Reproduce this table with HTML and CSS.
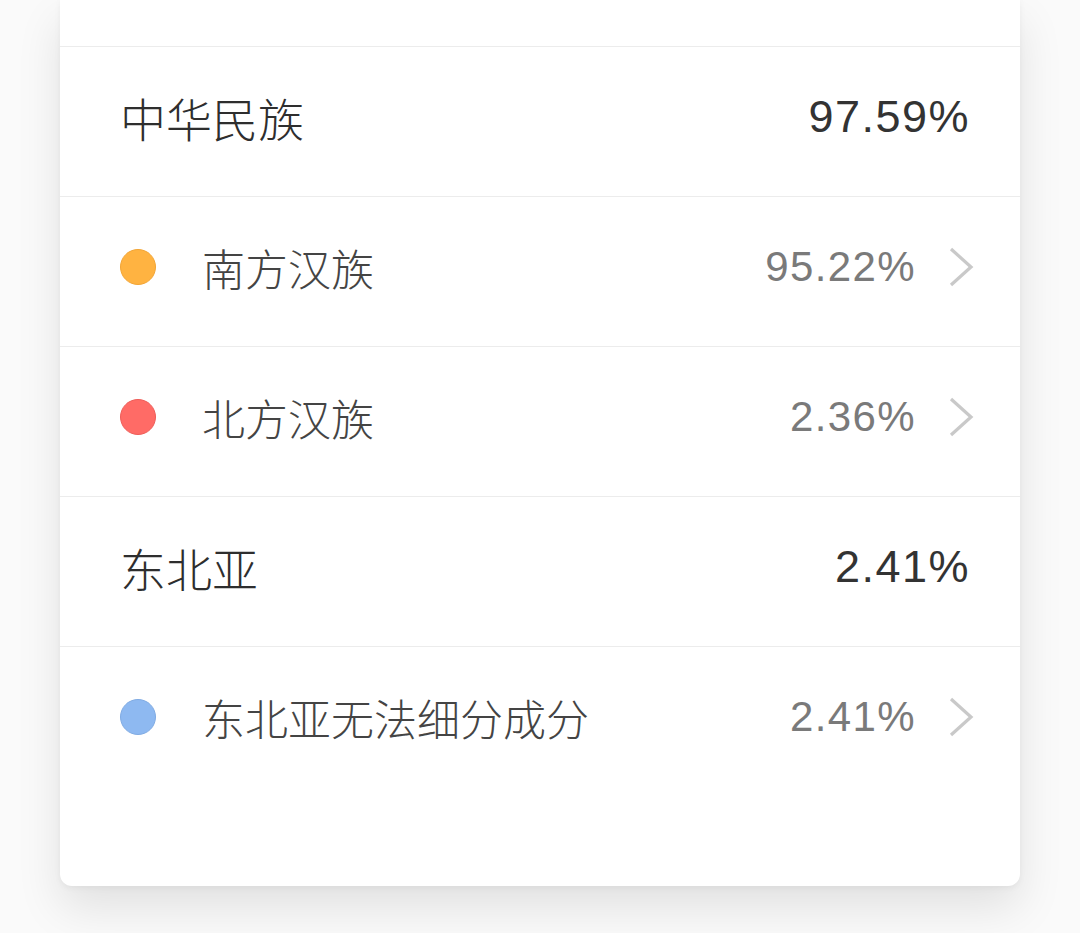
FILE: index.html
```html
<!DOCTYPE html>
<html lang="zh-CN">
<head>
<meta charset="utf-8">
<link rel="stylesheet" href="styles.css">
</head>
<body>
<div class="card">
  <div class="row spacer"></div>
  <div class="row main">
    <span class="label">中华民族</span>
    <span class="num">97.59%</span>
  </div>
  <div class="row sub">
    <span class="dot orange"></span>
    <span class="label">南方汉族</span>
    <span class="num">95.22%</span>
    <svg class="chev" viewBox="0 0 26 40" width="26" height="40"><path d="M3 2 L23 20 L3 38" fill="none" stroke="#c9c9c9" stroke-width="3.2"/></svg>
  </div>
  <div class="row sub">
    <span class="dot red"></span>
    <span class="label">北方汉族</span>
    <span class="num">2.36%</span>
    <svg class="chev" viewBox="0 0 26 40" width="26" height="40"><path d="M3 2 L23 20 L3 38" fill="none" stroke="#c9c9c9" stroke-width="3.2"/></svg>
  </div>
  <div class="row main">
    <span class="label">东北亚</span>
    <span class="num">2.41%</span>
  </div>
  <div class="row sub last">
    <span class="dot blue"></span>
    <span class="label">东北亚无法细分成分</span>
    <span class="num">2.41%</span>
    <svg class="chev" viewBox="0 0 26 40" width="26" height="40"><path d="M3 2 L23 20 L3 38" fill="none" stroke="#c9c9c9" stroke-width="3.2"/></svg>
  </div>
</div>
</body>
</html>
```

FILE: styles.css
```css
html, body {
  margin: 0;
  padding: 0;
  background: #fafafa;
  height: 933px;
  overflow: hidden;
}
body {
  font-family: "Noto Sans CJK SC", "Liberation Sans", sans-serif;
}
.card {
  margin-left: 60px;
  width: 960px;
  background: #fff;
  border-radius: 0 0 12px 12px;
  box-shadow: 0 22px 45px rgba(0, 0, 0, 0.1), 0 2px 6px rgba(0, 0, 0, 0.05);
  padding-bottom: 90px;
}
.row {
  display: flex;
  align-items: center;
  height: 140px;
  padding-bottom: 9px;
  border-bottom: 1px solid #ececec;
  box-sizing: content-box;
}
.row.spacer {
  height: 46px;
  padding-bottom: 0;
}
.row.last {
  border-bottom: none;
}
.main {
  padding-left: 60px;
  padding-right: 50px;
}
.main .label {
  font-size: 46px;
  font-weight: 300;
  color: #2e2e2e;
  flex: 1;
}
.main .num {
  font-family: "Liberation Sans", sans-serif;
  font-size: 45px;
  letter-spacing: 1.5px;
  color: #333;
}
.sub {
  padding-left: 60px;
  padding-right: 46px;
}
.dot {
  width: 34px;
  height: 34px;
  border-radius: 50%;
  margin-right: 46px;
  flex: none;
}
.orange { background: #ffb341; border: 1px solid #f2a535; }
.red { background: #ff6b66; border: 1px solid #ee5d58; }
.blue { background: #8eb9f1; border: 1px solid #80abe3; }
.sub .label {
  font-size: 43px;
  font-weight: 300;
  color: #444;
  flex: 1;
}
.sub .num {
  font-family: "Liberation Sans", sans-serif;
  font-size: 42px;
  letter-spacing: 1.4px;
  color: #7a7a7a;
  margin-right: 32px;
}
.chev {
  display: block;
  flex: none;
}
```
